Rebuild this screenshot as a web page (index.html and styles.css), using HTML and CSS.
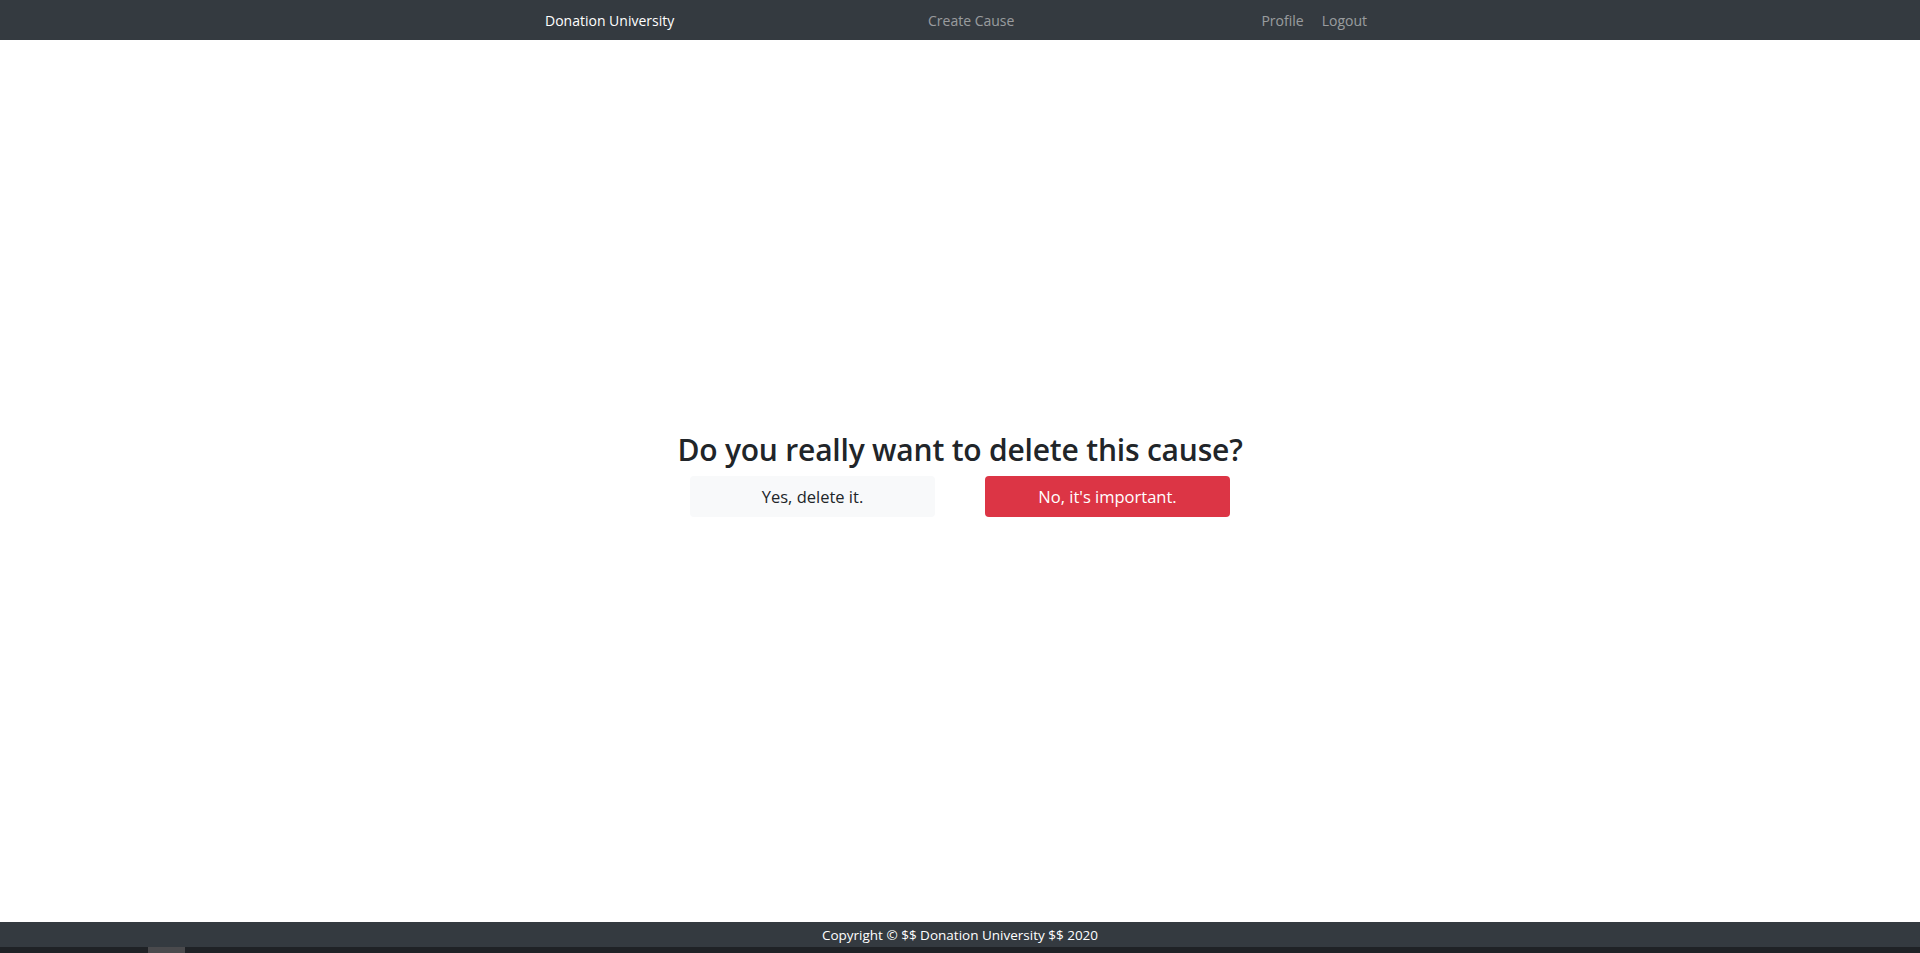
FILE: index.html
```html
<!DOCTYPE html>
<html lang="en">
<head>
<meta charset="utf-8">
<title>Donation University</title>
<link rel="stylesheet" href="styles.css">
</head>
<body>
<nav class="navbar">
  <div class="nav-inner">
    <a class="brand" href="#">Donation University</a>
    <a class="nav-link" href="#">Create Cause</a>
    <div class="nav-right">
      <a class="nav-link" href="#">Profile</a>
      <a class="nav-link" href="#">Logout</a>
    </div>
  </div>
</nav>
<main class="content">
  <div class="confirm">
    <h2 class="title">Do you really want to delete this cause?</h2>
    <div class="actions">
      <button class="btn btn-light">Yes, delete it.</button>
      <button class="btn btn-danger">No, it's important.</button>
    </div>
  </div>
</main>
<footer class="footer">Copyright © $$ Donation University $$ 2020</footer>
<div class="taskbar"><span class="task-item"></span></div>
</body>
</html>
```
FILE: styles.css
```css
* { box-sizing: border-box; }
html, body { height: 100%; }
body {
  margin: 0;
  font-family: "Open Sans", "Noto Sans", sans-serif;
  color: #212529;
  background: #fff;
  display: flex;
  flex-direction: column;
  min-height: 100vh;
}
.navbar {
  height: 40px;
  background: #343a40;
  display: flex;
  align-items: center;
}
.nav-inner {
  margin-left: 545px;
  width: 822px;
  display: grid;
  grid-template-columns: 383px 1fr auto;
  align-items: center;
  font-size: 14px;
}
.brand {
  color: #fff;
  text-decoration: none;
}
.nav-link {
  color: rgba(255,255,255,.5);
  text-decoration: none;
}
.nav-right {
  display: flex;
  gap: 18px;
}
.content {
  flex: 1;
  display: flex;
  align-items: center;
  justify-content: center;
  padding-bottom: 15px;
}
.confirm {
  display: flex;
  flex-direction: column;
  align-items: center;
}
.title {
  margin: 0 0 8px;
  font-size: 30px;
  font-weight: 600;
  line-height: 37px;
  letter-spacing: -0.2px;
}
.actions {
  display: flex;
  gap: 50px;
}
.btn {
  width: 245px;
  height: 41px;
  border: 1px solid transparent;
  border-radius: 4px;
  font-family: inherit;
  font-size: 16.5px;
  cursor: pointer;
}
.btn-light {
  background: #f8f9fa;
  color: #212529;
}
.btn-danger {
  background: #dc3545;
  color: #fff;
}
.footer {
  height: 25px;
  background: #343a40;
  color: #fff;
  font-size: 13.5px;
  display: flex;
  align-items: center;
  justify-content: center;
}
.taskbar {
  height: 6px;
  background: #1f2226;
  display: flex;
  padding-left: 148px;
}
.task-item {
  width: 37px;
  height: 6px;
  background: #4a4a4d;
}
```
